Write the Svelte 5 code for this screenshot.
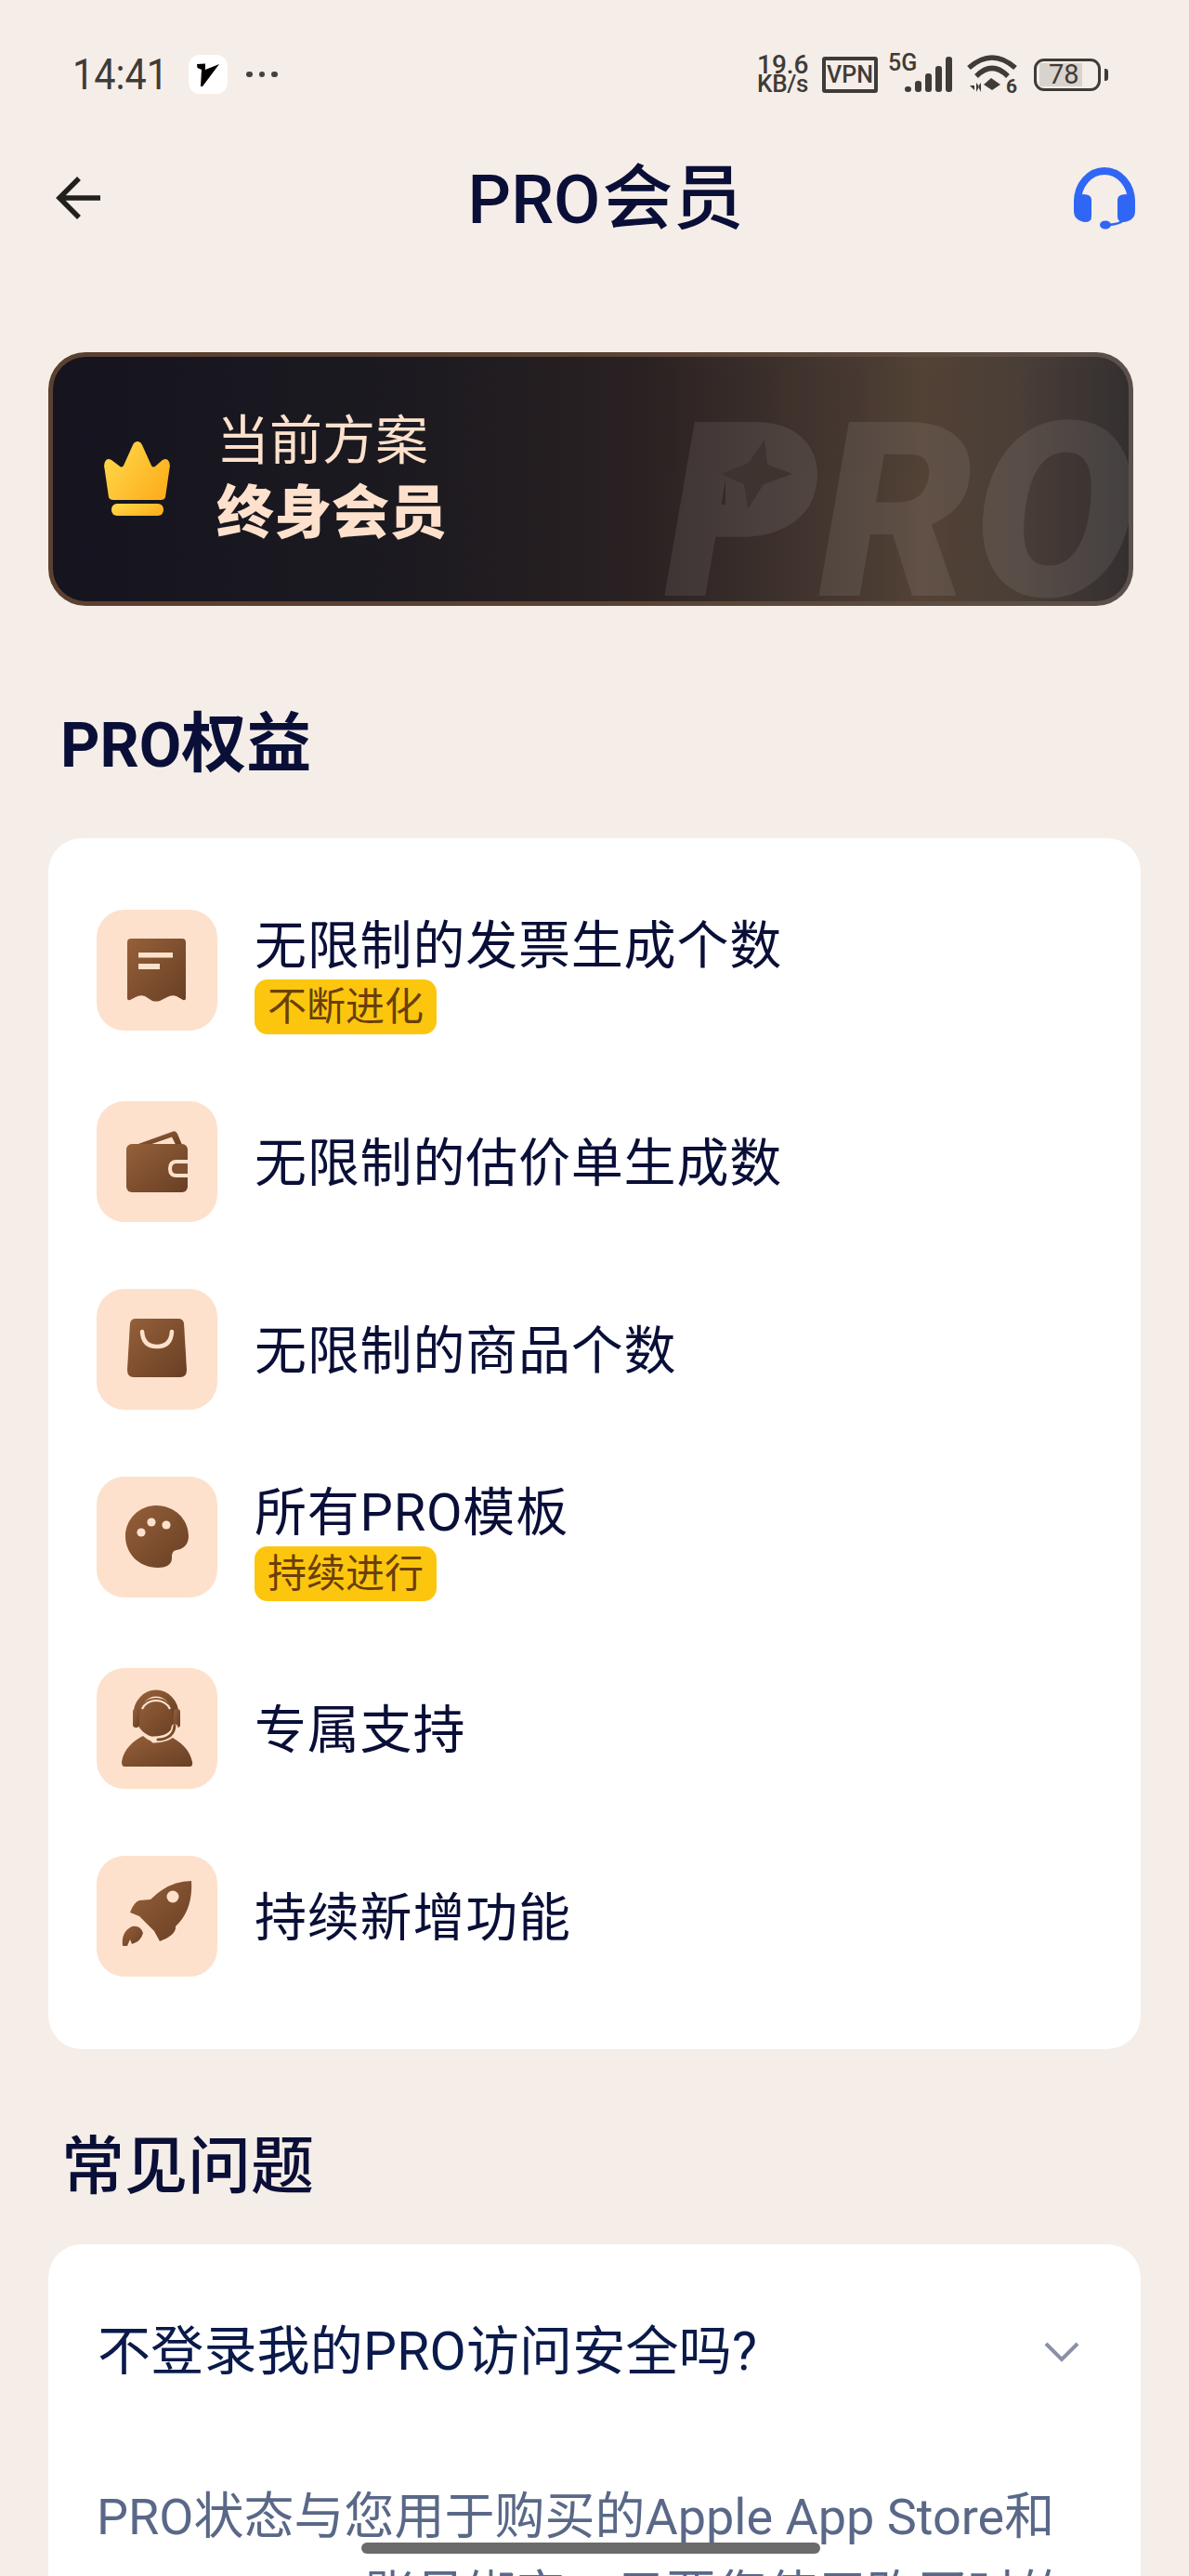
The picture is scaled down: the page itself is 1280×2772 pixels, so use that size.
<script lang="ts">
	const perks = [
		{ icon: 'receipt', label: '无限制的发票生成个数', tag: '不断进化' },
		{ icon: 'wallet', label: '无限制的估价单生成数' },
		{ icon: 'bag', label: '无限制的商品个数' },
		{ icon: 'palette', label: '所有PRO模板', tag: '持续进行' },
		{ icon: 'agent', label: '专属支持' },
		{ icon: 'rocket', label: '持续新增功能' }
	];
	const bars = [
		[0, 6],
		[11, 12],
		[22, 20],
		[33, 28],
		[44, 38]
	];
</script>

<svg class="defs" width="0" height="0" aria-hidden="true">
	<defs>
		<linearGradient id="brown" x1="0" y1="0" x2="1" y2="1">
			<stop offset="0" stop-color="#96603a" />
			<stop offset="1" stop-color="#683f24" />
		</linearGradient>
		<linearGradient id="gold" x1="0" y1="0" x2="1" y2="0.6">
			<stop offset="0" stop-color="#ffdc4e" />
			<stop offset="1" stop-color="#fdb01f" />
		</linearGradient>
	</defs>
</svg>

{#snippet perkIcon(name: string)}
	<svg viewBox="0 0 130 130" width="130" height="130" aria-hidden="true">
		{#if name === 'receipt'}
			<path
				fill="url(#brown)"
				d="M37 31H92Q96 31 96 35V95Q96 98 93 97L86 93Q81 91 76 94L68 98Q64 99 60 98L52 93Q47 91 42 94L36 97Q33 98 33 95V35Q33 31 37 31Z"
			/>
			<rect x="45" y="46" width="37" height="5.5" fill="#fde1cc" />
			<rect x="45" y="58" width="23" height="6" fill="#fde1cc" />
		{:else if name === 'wallet'}
			<path fill="url(#brown)" d="M42 47L81 33Q85 31 87 35L92 47Z" />
			<path fill="#fde1cc" d="M58 46.5L81 38.5L85 46.5Z" />
			<rect x="32" y="46" width="66" height="52" rx="6" fill="url(#brown)" />
			<path fill="#fde1cc" d="M98 63H86Q77 63 77 72.5Q77 82 86 82H98Z" />
			<path fill="#805030" d="M98 67H86Q81 67 81 72.5Q81 78 86 78H98Z" />
		{:else if name === 'bag'}
			<path
				fill="url(#brown)"
				d="M42 32H88Q93 32 94 37L97 87Q97 95 90 95H40Q33 95 33 87L36 37Q37 32 42 32Z"
			/>
			<path fill="none" stroke="#fde1cc" stroke-width="4.5" stroke-linecap="round" d="M49 46Q50 62 65 62Q80 62 81 46" />
		{:else if name === 'palette'}
			<path
				fill="url(#brown)"
				d="M64 31C84 31 99 46 99 64C99 74 92 78 86 79C81 80 81 84 81 88C81 95 74 98 66 98C46 98 31 83 31 64C31 46 46 31 64 31Z"
			/>
			<circle cx="59" cy="49" r="4.6" fill="#fde1cc" />
			<circle cx="75" cy="52" r="4.6" fill="#fde1cc" />
			<circle cx="48" cy="60" r="4.6" fill="#fde1cc" />
		{:else if name === 'agent'}
			<path
				fill="url(#brown)"
				d="M30 106H100Q104 106 103 101C100 87 90 79 78 73Q64 86 50 73C40 78 29 87 27 101Q27 106 30 106Z"
			/>
			<circle cx="64" cy="53" r="21" fill="url(#brown)" />
			<path fill="none" stroke="url(#brown)" stroke-width="7" d="M43 50A21 23 0 0 1 85 50" />
			<path fill="none" stroke="#fde1cc" stroke-width="2.2" d="M49 44A16 14 0 0 1 79 44" />
			<rect x="39" y="44" width="7" height="20" rx="3" fill="url(#brown)" />
			<rect x="83" y="44" width="7" height="20" rx="3" fill="url(#brown)" />
			<path fill="none" stroke="#fde1cc" stroke-width="7" stroke-linecap="round" d="M84 64Q83 76 62 77" />
			<path fill="none" stroke="#774a2a" stroke-width="3" stroke-linecap="round" d="M84 62Q83 76 66 77" />
		{:else if name === 'rocket'}
			<path
				fill="url(#brown)"
				d="M102 27Q104 58 85 76Q86 85 68 92L62 81L46 65L36 61Q40 50 46 48L58 47Q78 27 102 27Z"
			/>
			<circle cx="82" cy="44" r="6.5" fill="#fde1cc" />
			<path fill="url(#brown)" d="M28 97Q26 82 38 76Q47 74 50 83Q48 92 38 95L36 90L33 97Z" />
		{/if}
	</svg>
{/snippet}

<div class="page">
	<div class="status">
		<div class="left">
			<span class="time">14:41</span>
			<span class="app">
				<svg viewBox="0 0 42 42" width="42" height="42" aria-hidden="true">
					<path d="M9 10L18 9.5V16L33 10L15 34H13L14 16L9.5 14Z" fill="#000" />
				</svg>
			</span>
			<span class="dots"><i></i><i></i><i></i></span>
		</div>
		<div class="right">
			<span class="speed"><b>19.6</b><b class="unit">KB/s</b></span>
			<span class="vpn">VPN</span>
			<span class="cell">
				<span class="g">5G</span>
				<svg viewBox="0 0 52 40" width="52" height="40" aria-hidden="true">
					{#each bars as [x, h]}
						<rect {x} y={38 - h} width="7" height={h} rx="3" fill="#3f3b37" />
					{/each}
				</svg>
			</span>
			<svg class="wifi" viewBox="0 0 54 42" width="54" height="42" aria-hidden="true">
				<path d="M2 14Q27 -8 52 14" fill="none" stroke="#3f3b37" stroke-width="5.5" />
				<path d="M10 23Q27 6 44 23" fill="none" stroke="#3f3b37" stroke-width="5.5" />
				<path d="M18 32L26 25L36 32L27 38Z" fill="#3f3b37" />
				<path d="M3 33H8V38ZM10 40V30L13 34ZM15 40V30L12 34" fill="#3f3b37" />
				<text x="42" y="41" class="six">6</text>
			</svg>
			<span class="battery">
				<span class="level"></span>
				<span class="pct">78</span>
			</span>
			<span class="tip"></span>
		</div>
	</div>

	<header>
		<svg viewBox="0 0 48 48" width="48" height="48" aria-hidden="true">
			<path d="M48 24H5M25 3L4 24L25 45" fill="none" stroke="#22201c" stroke-width="5.5" />
		</svg>
		<h1>PRO<span class="big">会员</span></h1>
		<svg viewBox="26 12 66 68" width="66" height="68" aria-hidden="true">
			<path d="M30 50A29 33 0 0 1 88 50" fill="none" stroke="#2f66f6" stroke-width="8" />
			<path fill="#2f66f6" d="M26 50Q26 43 36 42Q45 42 45 48V66Q45 72 38 72Q26 70 26 60Z" />
			<path fill="#2f66f6" d="M92 50Q92 43 82 42Q73 42 73 48V66Q73 72 80 72Q92 70 92 60Z" />
			<path d="M79 70Q76 74 64 75" fill="none" stroke="#2f66f6" stroke-width="2.5" />
			<ellipse cx="60" cy="75" rx="6" ry="4.6" fill="#2f66f6" />
		</svg>
	</header>

	<div class="plan">
		<div class="plan-inner">
			<svg class="crown" viewBox="0 0 71 80" width="71" height="80" aria-hidden="true">
				<path
					fill="url(#gold)"
					d="M36 0Q40 0 42 6L51 26Q53 29 56 26L63 20Q68 17 70 22Q71.500 26 70.500 29L66 60Q65 63 61 63H10Q6 63 5 60L0.500 29Q-0.500 26 1 22Q3 17 8 20L16 26Q19 29 21 26L30 6Q32 0 36 0Z"
				/>
				<rect x="8" y="67" width="56" height="13" rx="6" fill="url(#gold)" />
			</svg>
			<div class="plan-text">
				<span class="plan-label">当前方案</span>
				<span class="plan-name">终身会员</span>
			</div>
			<div class="mark">
				<span>PRO</span>
				<i class="patch"></i>
			</div>
			<svg class="star" viewBox="0 0 78 75" width="78" height="75" aria-hidden="true">
				<path d="M47 0L50 27L77 37L46 48L29 75L25 48L0 37L30 25Z" fill="#3f3330" />
			</svg>
		</div>
	</div>

	<h2>PRO<span class="big">权益</span></h2>
	<section class="perks">
		{#each perks as perk}
			<div class="perk">
				<span class="icon">{@render perkIcon(perk.icon)}</span>
				{#if perk.tag}
					<div class="info">
						<span class="label">{perk.label}</span>
						<span class="tag">{perk.tag}</span>
					</div>
				{:else}
					<span class="label solo">{perk.label}</span>
				{/if}
			</div>
		{/each}
	</section>

	<h2 class="faq-title">常见问题</h2>
	<section class="faq">
		<div class="question">
			<span>不登录我的PRO访问安全吗?</span>
			<svg viewBox="0 0 38 22" width="38" height="22" aria-hidden="true">
				<path d="M2 2L19 19L36 2" fill="none" stroke="#8b90a8" stroke-width="4" />
			</svg>
		</div>
		<p class="answer first">PRO状态与您用于购买的Apple App Store和</p>
		<p class="answer second">账号绑定。只要您使用购买时的</p>
	</section>

	<div class="home"></div>
</div>

<style>
	:global(body) {
		margin: 0;
		background: #f5ede7;
	}

	.defs {
		position: absolute;
	}

	.page {
		position: relative;
		height: 2772px;
		overflow: hidden;
		background: #f5ede7;
		color: #0a0f38;
		font-family: Roboto, 'Noto Sans CJK SC', sans-serif;
	}

	.status {
		display: flex;
		justify-content: space-between;
		align-items: center;
		height: 160px;
		padding: 0 87px 0 78px;
		color: #3f3b37;
		box-sizing: border-box;
	}

	.left,
	.right {
		display: flex;
		align-items: center;
	}

	.time {
		width: 125px;
		font-size: 47px;
		line-height: 40px;
		transform: scaleX(0.88);
		transform-origin: left;
	}

	.app {
		display: block;
		width: 42px;
		height: 42px;
		border-radius: 12px;
		background: #fff;
	}

	.app svg {
		display: block;
	}

	.dots {
		display: flex;
		gap: 7px;
		margin-left: 20px;
	}

	.dots i {
		width: 6.500px;
		height: 6.500px;
		border-radius: 50%;
		background: #45413d;
	}

	.speed {
		display: flex;
		flex-direction: column;
		width: 55px;
		margin-right: 15px;
		font-size: 28px;
		line-height: 21px;
	}

	.speed b {
		font-weight: 500;
	}

	.unit {
		font-size: 26px;
		letter-spacing: -0.3px;
	}

	.vpn {
		box-sizing: border-box;
		width: 60px;
		height: 39px;
		margin-right: 11px;
		border: 4px solid #3f3b37;
		border-radius: 3px;
		font-size: 25px;
		font-weight: 500;
		line-height: 31px;
		text-align: center;
	}

	.cell {
		position: relative;
		display: flex;
		justify-content: flex-end;
		width: 70px;
		height: 42px;
		margin-right: 15px;
	}

	.cell svg {
		align-self: flex-end;
	}

	.g {
		position: absolute;
		left: 0;
		top: -3px;
		font-size: 25px;
		font-weight: 500;
		line-height: 24px;
	}

	.six {
		font-family: Roboto, sans-serif;
		font-size: 21px;
		font-weight: 700;
		fill: #3f3b37;
	}

	.wifi {
		margin-right: 18px;
	}

	.battery {
		position: relative;
		box-sizing: border-box;
		width: 72px;
		height: 35px;
		border: 3.500px solid #3f3b37;
		border-radius: 11px;
	}

	.level {
		position: absolute;
		left: 3px;
		top: 2px;
		bottom: 2px;
		width: 46px;
		background: #d9d3cd;
	}

	.pct {
		position: absolute;
		left: 13px;
		top: 0;
		font-size: 29px;
		line-height: 28px;
		font-weight: 400;
		color: #3f3b37;
	}

	.tip {
		width: 4px;
		height: 13px;
		margin-left: 4px;
		border-radius: 0 3px 3px 0;
		background: #3f3b37;
	}

	header {
		display: flex;
		justify-content: space-between;
		align-items: center;
		height: 106px;
		padding: 0 58px 0 60px;
	}

	h1 {
		margin: 2px 0 0 40px;
		font-size: 73px;
		font-weight: 500;
		line-height: 106px;
	}

	h1 .big {
		font-size: 76px;
		margin-left: 2px;
	}

	.plan {
		height: 273px;
		margin: 113px 60px 0 52px;
		padding: 5px;
		box-sizing: border-box;
		border-radius: 40px;
		background: linear-gradient(90deg, #5b4030 0%, #5a4232 50%, #5d4b3f 80%, #5c504b 100%);
	}

	.plan-inner {
		position: relative;
		display: flex;
		align-items: center;
		height: 100%;
		overflow: hidden;
		border-radius: 35px;
		background: linear-gradient(
			90deg,
			#15141f 0%,
			#1c1a20 33%,
			#2a2122 55%,
			#352a28 62%,
			#483a32 75%,
			#534236 81%,
			#4a3e38 90%,
			#353030 100%
		);
	}

	.crown {
		margin-left: 55px;
		margin-top: -1px;
	}

	.plan-text {
		display: flex;
		flex-direction: column;
		margin-left: 50px;
		padding-top: 3px;
		color: #fde1cc;
	}

	.plan-label {
		font-size: 57px;
		line-height: 72px;
		margin-top: -6px;
	}

	.plan-name {
		margin-top: 6px;
		font-size: 62px;
		font-weight: 900;
		line-height: 72px;
	}

	.mark {
		position: absolute;
		left: 658px;
		top: 0;
		width: 600px;
		height: 100%;
		opacity: 0.08;
		color: #fff;
	}

	.mark span {
		position: absolute;
		left: 0;
		top: 36px;
		font-size: 263px;
		font-style: italic;
		font-weight: 900;
		line-height: 263px;
	}

	.patch {
		position: absolute;
		left: 66px;
		top: 88px;
		width: 72px;
		height: 80px;
		background: #fff;
	}

	.star {
		position: absolute;
		left: 719px;
		top: 89px;
	}

	h2 {
		height: 80px;
		margin: 111px 0 0 65px;
		font-size: 66px;
		font-weight: 700;
		line-height: 80px;
		color: #0a0f38;
	}

	h2 .big {
		font-size: 70px;
		line-height: 1;
	}

	.perks {
		display: flex;
		flex-direction: column;
		gap: 72px;
		margin: 59px 52px 0 52px;
		padding: 77px 52px 78px;
		border-radius: 36px;
		background: #fff;
	}

	.perk {
		display: flex;
		gap: 40px;
		align-items: flex-start;
		min-height: 130px;
	}

	.icon {
		display: block;
		flex: none;
		width: 130px;
		height: 130px;
		border-radius: 30px;
		background: #fde1cc;
	}

	.icon svg {
		display: block;
	}

	.info {
		display: flex;
		flex-direction: column;
		align-items: flex-start;
		gap: 4px;
		padding-top: 7px;
	}

	.label {
		font-size: 56px;
		letter-spacing: 0.8px;
		line-height: 64px;
		color: #0a0f38;
	}

	.solo {
		align-self: center;
		padding-top: 3px;
	}

	.tag {
		padding: 0 14px;
		height: 59px;
		border-radius: 14px;
		background: #fcc60f;
		font-size: 42px;
		line-height: 60px;
		color: #6b3f08;
	}

	.faq-title {
		margin: 87px 0 0 66px;
		font-weight: 500;
		font-size: 68px;
	}

	.faq {
		margin: 43px 52px 0 52px;
		padding: 81px 56px 60px 53px;
		border-radius: 36px;
		background: #fff;
	}

	.question {
		display: flex;
		justify-content: space-between;
		align-items: center;
		height: 70px;
		font-size: 57px;
		letter-spacing: 0.2px;
		line-height: 70px;
		color: #0a1a4a;
	}

	.question svg {
		margin-right: 10px;
	}

	.answer {
		margin: 0;
		font-size: 54px;
		line-height: 84px;
		color: #5a6888;
		white-space: nowrap;
	}

	.first {
		margin-top: 101px;
		margin-left: -1px;
	}

	.second {
		margin-left: 288px;
	}

	.home {
		position: absolute;
		left: 389px;
		top: 2736px;
		width: 494px;
		height: 12px;
		border-radius: 6px;
		background: #6b6b6b;
	}
</style>
